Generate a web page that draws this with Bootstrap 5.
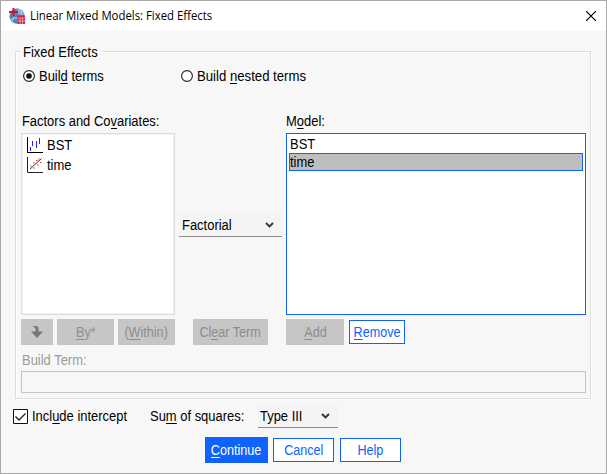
<!DOCTYPE html>
<html lang="en">
<head>
<meta charset="utf-8">
<meta name="viewport" content="width=device-width, initial-scale=1">
<title>Linear Mixed Models: Fixed Effects</title>
<link href="https://cdn.jsdelivr.net/npm/bootstrap@5.3.0/dist/css/bootstrap.min.css" rel="stylesheet">
<style>
body{font-family:"Liberation Sans",Arial,sans-serif;font-size:14px;line-height:16px;color:#000;background:#f7f7f7;margin:0;overflow:hidden;white-space:nowrap}
u{text-decoration:none;box-shadow:inset 0 -1px 0 currentColor;display:inline-block;height:16px;line-height:16px}
.dialog{width:607px;height:474px;border:1px solid #a9a9a9;background:#f7f7f7}
.titlebar{height:30px;font-family:"Open Sans",sans-serif;font-size:12px;padding:0 10px 0 8px}
.t{display:inline-block;transform:scaleX(.925);transform-origin:left}
.btn .t{transform:scaleX(.9);transform-origin:center}
.t.title-text{margin-left:5px;transform:scaleX(.947)}
.group{margin:20px 15px 0 14px;height:348px;border:1px solid #dcdcdc;box-shadow:1px 1px 0 #fff,inset 1px 1px 0 #fff;padding:0 4px 0 5px}
.legend-text{width:82px;height:16px;margin-top:-8px;margin-left:-1px;padding-left:3px;background:#f7f7f7}
.radios{height:16px;margin-top:8px;padding-left:2px}
.nested-label{transform:scaleX(.94)}
.radio-icon{width:12px;height:12px;margin-right:4px}
.captions{height:16px;margin-top:29px}
.source{width:154px;height:182px;border:1px solid #dcdcdc;box-shadow:inset 0 0 0 1px #f2f2f2;background:#fff;padding:1px 5px}
.source-item{height:20px}
.source-item svg{width:16px;height:16px;margin-right:4px}
.source-item:first-child{height:19px}
.source-item:last-child{height:21px}
.term-kind{width:103px;height:24px;margin:2px 4px 0}
.pick{background:#f4f4f4;border-bottom:1px solid #8d8d8d;height:24px}
.model{width:300px;height:182px;border:1px solid #0f62fe;background:#fff;padding:1px 2px}
.model-item{height:18px;line-height:18px;padding-left:1px;border:0}
.model-item.chosen{border:1px solid #0f62fe;background:#bebebe;padding-left:0;line-height:16px}
.flat{border:0;border-radius:0;height:26px;padding:0;font-size:14px;line-height:26px;--bs-btn-disabled-bg:#c6c6c6;--bs-btn-disabled-color:#8d8d8d;--bs-btn-disabled-opacity:1}
.outline{border:1px solid #0f62fe;border-radius:0;height:24px;padding:0;font-size:14px;line-height:22px;color:#0f62fe;background:#fff}
.primary{background:#0f62fe;color:#fff}
.term-label{height:26px;padding:7px 0 0 1px;color:#9a9a9a}
.term-box{height:22px;border:1px solid #c6c6c6}
.checkbox-icon{width:15px;height:15px;margin-right:4px}
.options{height:24px;margin:5px 0 0 12px}
.actions{height:26px;margin:9px 0 0 204px}
</style>
<script src="https://cdn.jsdelivr.net/npm/bootstrap@5.3.0/dist/js/bootstrap.bundle.min.js"></script>
</head>
<body>
<main class="dialog">
  <header class="titlebar bg-white d-flex align-items-center">
    <svg width="16" height="17" viewBox="0 0 16 17"><circle cx="8" cy="8.200" r="7.600" fill="#4b88bd"/><path d="M8 .6a7.600 7.600 0 0 1 7.400 6L9 7z" fill="#86b0d6"/><path d="M1 12c3-2 5-2 7-2M10 1c2 2 3 4 3 6M3 15c0-3 1-4 3-6" stroke="#b9d3ea" fill="none"/><path d="M4.500 0v8M0 4h9" stroke="#d90d35" stroke-width="2"/><path d="M8.500 7.500H16V16H8.500z" fill="#cf2348"/><path d="M8.500 10h7.500M8.500 13h7.500M11 10v6M13.500 10v6" stroke="#f3bcc8" stroke-width=".7"/></svg>
    <span class="t title-text">Linear Mixed Models: Fixed Effects</span>
    <svg class="ms-auto" width="10" height="10" viewBox="0 0 10 10"><path d="M0 0l10 10M10 0L0 10" stroke="#000" stroke-width="1.200"/></svg>
  </header>

  <section class="group">
    <div class="legend-text"><span class="t">Fixed Effects</span></div>
    <div class="radios d-flex align-items-center">
      <svg class="radio-icon" viewBox="0 0 12 12"><circle cx="6" cy="6" r="5.400" fill="#fff" stroke="#222" stroke-width="1.100"/><circle cx="6" cy="6" r="2.800" fill="#111"/></svg>
      <span class="t" style="width:142px">Buil<u>d</u> terms</span>
      <svg class="radio-icon" viewBox="0 0 12 12"><circle cx="6" cy="6" r="5.400" fill="#fff" stroke="#222" stroke-width="1.100"/></svg>
      <span class="t nested-label">Build <u>n</u>ested terms</span>
    </div>
    <div class="captions d-flex">
      <span class="t" style="width:265px;padding-left:1px">Factors and Co<u>v</u>ariates:</span>
      <span class="t">M<u>o</u>del:</span>
    </div>
    <div class="d-flex align-items-center mt-1">
      <div class="source">
        <div class="source-item d-flex align-items-center"><svg viewBox="0 0 16 16" shape-rendering="crispEdges"><path d="M.5 0v15.500H16" fill="none" stroke="#000"/><path d="M3.500 10v4M5.500 4v5M9.500 4v7M12.500 1v6" stroke="#22f"/></svg><span class="t">BST</span></div>
        <div class="source-item d-flex align-items-center"><svg viewBox="0 0 16 16"><path d="M.5 0v15.500H16" fill="none" stroke="#222"/><path d="M3 12L14.500 1.500" stroke="#333"/><path d="M3 9h1.500M6 6h1.500M6 11h1.500M9 3.500h1.500M10 8h1.500M13 5.500h1.500M11 2h1.500" stroke="#e33"/></svg><span class="t">time</span></div>
      </div>
      <div class="term-kind"><div class="pick d-flex align-items-center justify-content-between pe-2" style="padding-left:3px"><span class="t">Factorial</span><svg width="9" height="6" viewBox="0 0 9 6"><path d="M1 1l3.500 3.500L8 1" fill="none" stroke="#333" stroke-width="1.800"/></svg></div></div>
      <div class="model">
        <div class="model-item"><span class="t">BST</span></div>
        <div class="model-item chosen"><span class="t">time</span></div>
      </div>
    </div>
    <div class="d-flex align-items-center mt-1">
      <button class="btn flat me-1" style="width:32px" disabled aria-label="Move down"><svg class="d-block mx-auto" width="12" height="12" viewBox="0 0 12 12"><path d="M1.500 0H5q2.500 0 2.500 2.500V5.500H12L6 12 0 5.500H4.500V3Q4.500 1.500 1.500 0z" fill="#777"/></svg></button>
      <button class="btn flat me-1" style="width:57px" disabled><span class="t"><u>B</u>y*</span></button>
      <button class="btn flat" style="width:57px" disabled><span class="t">(<u>W</u>ithin)</span></button>
      <button class="btn flat" style="width:75px;margin:0 18px" disabled><span class="t">Cl<u>e</u>ar Term</span></button>
      <button class="btn flat" style="width:58px;margin-right:5px" disabled><span class="t"><u>A</u>dd</span></button>
      <button class="btn outline" style="width:56px"><span class="t"><u>R</u>emove</span></button>
    </div>
    <div class="term-label"><span class="t">Build Term:</span></div>
    <div class="term-box"></div>
  </section>

  <div class="options d-flex align-items-center">
    <svg class="checkbox-icon" viewBox="0 0 15 15"><path d="M.5.5h14v14H.5z" fill="#fff" stroke="#111"/><path d="M2.500 7.500l3.500 3.500 6.500-6.500" fill="none" stroke="#222" stroke-width="1.400"/></svg>
    <span class="t" style="width:118px">Incl<u>u</u>de intercept</span>
    <span class="t" style="width:108px">Su<u>m</u> of squares:</span>
    <div class="pick d-flex align-items-center justify-content-between pe-2" style="width:80px;padding-left:2px"><span class="t">Type III</span><svg width="9" height="6" viewBox="0 0 9 6"><path d="M1 1l3.500 3.500L8 1" fill="none" stroke="#333" stroke-width="1.800"/></svg></div>
  </div>
  <div class="actions d-flex align-items-center">
    <button class="btn flat primary" style="width:63px;margin-right:5px"><span class="t"><u>C</u>ontinue</span></button>
    <button class="btn outline" style="width:61px;margin-right:6px"><span class="t">Cancel</span></button>
    <button class="btn outline" style="width:61px"><span class="t">Help</span></button>
  </div>
</main>
</body>
</html>
